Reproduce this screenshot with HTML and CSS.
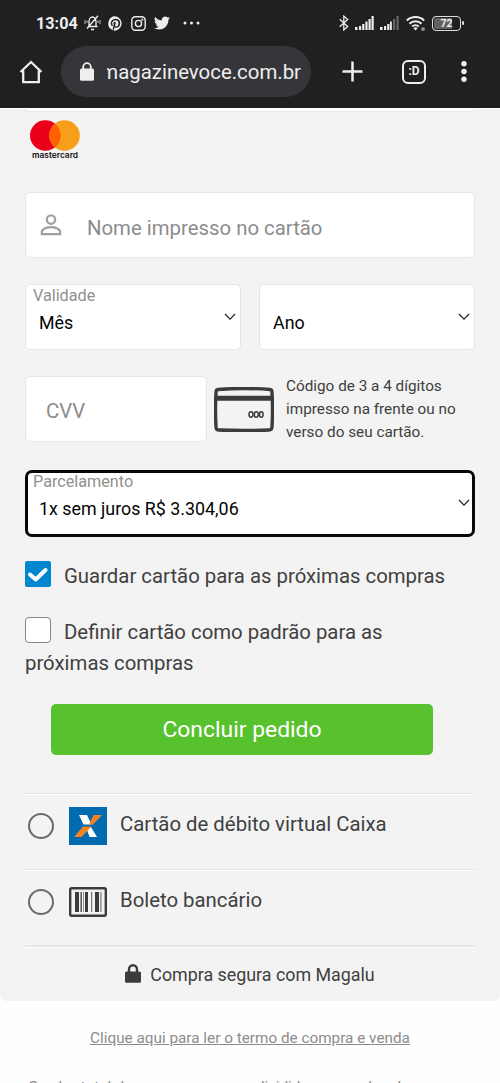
FILE: index.html
```html
<!DOCTYPE html>
<html lang="pt-BR">
<head>
<meta charset="utf-8">
<meta name="viewport" content="width=device-width, initial-scale=1">
<title>Pagamento</title>
<link rel="stylesheet" href="styles.css">
</head>
<body>
<header class="chrome">
  <div class="status">
    <span class="clock">13:04</span>
    <svg class="st-bell" width="17" height="16" viewBox="0 0 17 16" fill="none" stroke="#eee" stroke-width="1.300"><path d="M4 11.500h9M5 11V6.500a3.500 4.500 0 0 1 7 0V11l1.500 1M3 13.500L14 .8M7 14.500h3"/><path stroke="#999" d="M1 5v4M3 5.500v2.500M14 5.500v2.500M16 5v4"/></svg>
    <svg class="st-pin" width="15" height="15" viewBox="0 0 24 24"><path fill="#eee" d="M12 .5a11.5 11.5 0 0 0-4.2 22.2c-.1-.9-.2-2.300 0-3.300l1.400-5.700s-.4-.7-.4-1.700c0-1.600.9-2.800 2.100-2.800 1 0 1.500.7 1.500 1.600 0 1-.6 2.500-1 3.800-.3 1.200.6 2.100 1.700 2.100 2.100 0 3.700-2.200 3.700-5.300 0-2.800-2-4.700-4.900-4.700-3.300 0-5.200 2.500-5.200 5 0 1 .4 2.100.9 2.700v.4l-.4 1.300c0 .2-.2.3-.4.2-1.500-.7-2.400-2.800-2.400-4.600 0-3.700 2.700-7.200 7.900-7.200 4.100 0 7.300 2.900 7.300 6.900 0 4.100-2.600 7.400-6.200 7.400-1.200 0-2.300-.6-2.700-1.400l-.8 2.900c-.3 1-.9 2.200-1.400 3A11.500 11.500 0 1 0 12 .5z"/></svg>
    <svg class="st-insta" width="15" height="15" viewBox="0 0 15 15" fill="none" stroke="#eee" stroke-width="1.400"><rect x=".8" y=".8" width="13.400" height="13.400" rx="3.500"/><circle cx="7.500" cy="7.500" r="3.100"/><circle cx="11.300" cy="3.700" r=".4"/></svg>
    <svg class="st-bird" width="16" height="14" viewBox="0 2 24 20"><path fill="#eee" d="M23.950 4.570a10 10 0 0 1-2.820.770 4.960 4.960 0 0 0 2.160-2.720c-.950.550-2 .950-3.130 1.180a4.920 4.920 0 0 0-8.380 4.480C7.690 8.090 4.070 6.130 1.640 3.160a4.920 4.920 0 0 0 1.520 6.570 4.900 4.900 0 0 1-2.230-.610v.060a4.920 4.920 0 0 0 3.950 4.830 5 5 0 0 1-2.210.080 4.940 4.940 0 0 0 4.600 3.420A9.870 9.870 0 0 1 0 19.540a13.990 13.990 0 0 0 7.550 2.210c9.050 0 14-7.500 14-13.980l-.020-.640a10 10 0 0 0 2.420-2.560z"/></svg>
    <svg class="st-dots" width="17" height="4" viewBox="0 0 17 4" fill="#eee"><circle cx="2" cy="2" r="1.500"/><circle cx="8.500" cy="2" r="1.500"/><circle cx="15" cy="2" r="1.500"/></svg>
    <svg class="st-bt" width="10" height="16" viewBox="0 0 10 16" fill="none" stroke="#eee" stroke-width="1.300"><path d="M.7 4.200l8 7.300-3.900 3.400V1.100l3.900 3.400-8 7.300"/></svg>
    <svg class="st-sig" width="19" height="14" viewBox="0 0 19 14" fill="#eee"><path d="M0 11h2.500v3H0zM4 10h2.200v4H4zM7.200 8h2.200v6H7.200zM10.400 5.500h2.200V14h-2.200zM13.500 3h2.200v11h-2.200zM16.500 0h2.200v14h-2.200z"/></svg>
    <svg class="st-sig2" width="19" height="14" viewBox="0 0 19 14" fill="#eee"><path d="M0 11h2.500v3H0zM4 10h2.200v4H4zM7.200 8h2.200v6H7.200zM10 5.500h1.800V14H10z"/><path fill="#666" d="M13 3h2.200v11H13zM16.500 0h2.200v14h-2.200z"/></svg>
    <svg class="st-wifi" width="20" height="17" viewBox="0 0 20 17" fill="none" stroke="#eee" stroke-width="2"><path d="M.8 5.500a12.800 12.800 0 0 1 17.400 0M3.500 8.700a8.500 8.500 0 0 1 12 0M6.200 11.500a4.700 4.700 0 0 1 6.600 0"/><path fill="#eee" stroke="none" d="M7.300 13q2.200-1.400 4.400 0L9.500 15.500z"/><circle cx="17" cy="14" r="1.200" stroke="#aaa" stroke-width="1.300"/></svg>
    <div class="battery">72</div>
  </div>
  <div class="toolbar">
    <svg class="home" width="24" height="24" viewBox="0 0 24 24" fill="none" stroke="#eee" stroke-width="2.300"><path d="M1.500 12L12 2l10.500 10M4.200 10.500v11.700h15.600V10.500"/></svg>
    <div class="url">
      <svg width="14" height="19" viewBox="0 0 14 19"><path d="M3.200 8V5a3.800 3.800 0 0 1 7.600 0v3" fill="none" stroke="#eee" stroke-width="1.800"/><rect y="6.500" width="14" height="12.300" rx="1.500" fill="#eee"/></svg>
      <div class="address"><span>magazinevoce.com.br</span></div>
    </div>
    <svg class="plus" width="21" height="21" viewBox="0 0 21 21" stroke="#eee" stroke-width="2.500"><path d="M10.500 .5v20M.5 10.500h20"/></svg>
    <div class="tabs">:D</div>
    <svg class="kebab" width="6" height="21" viewBox="0 0 6 21" fill="#eee"><circle cx="3" cy="2.700" r="2.700"/><circle cx="3" cy="10.500" r="2.700"/><circle cx="3" cy="18.300" r="2.700"/></svg>
  </div>
</header>

<main class="checkout">
  <div class="prev-field"></div>
  <svg class="brand" width="50" height="42" viewBox="0 0 50 42"><circle cx="15.300" cy="15.500" r="15.300" fill="#eb001b"/><circle cx="34.500" cy="15.500" r="15.300" fill="#f79e1b"/><path d="M25 3.600a15.300 15.300 0 0 1 0 23.800 15.300 15.300 0 0 1 0-23.800z" fill="#ff5f00"/><text class="brand-name" x="2" y="38.300" textLength="46" lengthAdjust="spacingAndGlyphs">mastercard</text></svg>

  <div class="field name-field">
    <svg width="22" height="22" viewBox="0 0 22 22" fill="none" stroke="#a0a0a0" stroke-width="2.200"><circle cx="11" cy="5.600" r="4.200"/><path d="M1.800 20.200v-2.400c0-2.500 5-4.600 9.200-4.600s9.200 2.100 9.200 4.600v2.400z"/></svg>
    <span class="hint">Nome impresso no cartão</span>
  </div>

  <div class="expiry">
    <div class="field select"><span class="label">Validade</span><span class="value">Mês</span><svg class="chev" width="12" height="8" viewBox="0 0 12 8"><path d="M1 1l5 5.200L11 1"/></svg></div>
    <div class="field select"><span class="label"></span><span class="value">Ano</span><svg class="chev" width="12" height="8" viewBox="0 0 12 8"><path d="M1 1l5 5.200L11 1"/></svg></div>
  </div>

  <div class="cvv-row">
    <div class="field cvv"><span class="hint">CVV</span></div>
    <svg class="card" width="60" height="45" viewBox="0 0 60 45" fill="none" stroke="#3c3c3c"><path d="M4 2.500Q30 .5 56 2.500q2 .2 2 3Q59 22 58 40q-.2 3-3 3-25 1-50 0-3 0-3-3Q1 22 2 5.500q0-2.800 2-3z" stroke-width="3.400"/><path d="M2 11.200h56" stroke-width="5"/><path d="M4 6.500q26-2 52 0" stroke="#f3f3f3" stroke-width="2.600"/><g stroke-width="1.500"><ellipse cx="37" cy="27.500" rx="2" ry="2.700"/><ellipse cx="42.300" cy="27.500" rx="2" ry="2.700"/><ellipse cx="47.300" cy="27.500" rx="1.800" ry="2.700"/></g></svg>
    <p class="cvv-help">Código de 3 a 4 dígitos<br>impresso na frente ou no<br>verso do seu cartão.</p>
  </div>

  <div class="field select installments"><span class="label">Parcelamento</span><span class="value">1x sem juros R$ 3.304,06</span><svg class="chev" width="12" height="8" viewBox="0 0 12 8"><path d="M1 1l5 5.200L11 1"/></svg></div>

  <div class="check-line save"><span class="box on"><svg width="26" height="26" viewBox="0 0 26 26"><path d="M5 13.500l5.700 5L20.500 9" fill="none" stroke="#fff" stroke-width="4" stroke-linecap="round" stroke-linejoin="round"/></svg></span><span class="save-text">Guardar cartão para as próximas compras</span></div>
  <div class="check-line default"><span class="box"></span><span class="def-text">Definir cartão como padrão para as</span><br><span class="def-text2">próximas compras</span></div>

  <div class="submit"><span>Concluir pedido</span></div>

  <div class="method debit">
    <span class="radio"></span>
    <svg width="38" height="38" viewBox="0 0 38 38"><path fill="#006bae" d="M0 0h38v38H0z"/><path fill="#fff" d="M10 8h8l4.500 9.500h-8zM17.500 21.500L22 20l6 10h-7.500z"/><path fill="#f58220" d="M24.500 8H33l-9 9.500h-4zM14 19.500h8.500L12.500 30H5z"/></svg>
    <span class="method-name">Cartão de débito virtual Caixa</span>
  </div>
  <div class="method boleto">
    <span class="radio"></span>
    <svg width="38" height="30" viewBox="0 0 38 30"><rect x="1.200" y="1.200" width="35.600" height="27.600" rx="1.500" fill="#f3f3f3" stroke="#3c3c3c" stroke-width="2.400"/><path fill="#3c3c3c" d="M6 5h4v20H6zM11.500 5h1.300v20h-1.300zM16 5h3v20h-3zM26 5h4v20h-4z"/><path fill="#777" d="M14 5h.8v20H14zM22 5h1.200v20H22zM31.300 5h1.200v20h-1.200z"/></svg>
    <span class="method-name">Boleto bancário</span>
  </div>
  <div class="secure">
    <svg width="16" height="19" viewBox="0 0 16 19"><path d="M4 9V5.200a4 4 0 0 1 8 0V9" fill="none" stroke="#3c3c3c" stroke-width="2.400"/><rect y="7.500" width="16" height="11.200" rx="1.500" fill="#3c3c3c"/></svg>
    <span class="secure-text">Compra segura com Magalu</span>
  </div>
</main>
<footer class="legal">
  <a class="terms">Clique aqui para ler o termo de compra e venda</a>
  <p class="note">O valor total da sua compra sera dividido em vendas de</p>
</footer>
</body>
</html>
```
FILE: styles.css
```css
* { box-sizing: border-box; }
body { margin: 0; width: 500px; height: 1083px; overflow: hidden; background: #fefefe; font-family: Roboto, "Open Sans", sans-serif; color: #404040; }
svg { display: block; flex: none; }
span, a { white-space: nowrap; }

.chrome { height: 108px; background: #202020; color: #eee; }
.status { display: flex; align-items: center; height: 46px; padding-left: 36px; }
.clock { width: 41px; font-size: 16.200px; font-weight: 700; }
.st-bell { margin-left: 7px; }
.st-pin { margin-left: 7px; }
.st-insta { margin-left: 8px; }
.st-bird { margin-left: 8px; }
.st-dots { margin-left: 13px; }
.st-bt { margin-left: 139px; }
.st-sig { margin-left: 6px; }
.st-sig2 { margin-left: 6px; }
.st-wifi { margin-left: 7px; }
.battery { position: relative; width: 29px; height: 15px; margin-left: 6px; border: 1.500px solid #ddd; border-radius: 4px; background: linear-gradient(90deg, #626262 72%, #202020 72%); font-size: 10.500px; font-weight: 700; line-height: 14px; text-align: center; box-shadow: inset 0 0 0 1px #202020; }
.battery::after { content: ""; position: absolute; right: -4px; top: 4px; width: 2px; height: 4px; background: #ddd; border-radius: 1px; }
.toolbar { display: flex; align-items: center; height: 51px; padding-left: 19px; }
.url { display: flex; align-items: center; width: 250px; height: 51px; margin-left: 18px; padding-left: 19px; border-radius: 26px; background: #35363a; }
.address { display: flex; justify-content: flex-end; width: 194px; margin: 1px 0 0 13px; overflow: hidden; font-size: 20.400px; }
.plus { margin-left: 31px; }
.tabs { width: 24px; height: 24px; margin-left: 39px; border: 2.500px solid #eee; border-radius: 6px; font-size: 12px; font-weight: 700; line-height: 19px; text-align: center; }
.kebab { margin-left: 35px; }

.checkout { height: 893px; padding: 0 25px; background: #f3f3f3; border-top: 1px solid #fff; border-radius: 0 0 6px 6px; }
.prev-field { height: 3px; border: 1px solid #e7e7e7; border-top: 0; border-radius: 0 0 5px 5px; background: #fff; }
.brand { margin: 8px 0 0 5px; }
.brand-name { font: 600 8px Inter, sans-serif; fill: #111; }
.field { border: 1px solid #e6e6e6; border-radius: 5px; background: #fff; }
.name-field { display: flex; align-items: center; height: 66px; margin-top: 30px; padding-left: 14px; }
.name-field .hint { margin: 5px 0 0 25px; }
.hint { font-size: 20.350px; color: #8c8c8c; }
.expiry { display: grid; grid-template-columns: 216px 216px; gap: 18px; margin-top: 26px; }
.select { position: relative; display: flex; flex-direction: column; height: 66px; padding: 2px 0 0 7px; }
.label { height: 20px; font-size: 16.200px; line-height: 18px; color: #8f8f8f; }
.value { margin: 4px 0 0 6px; font-size: 17.850px; line-height: 24px; color: #050505; }
.chev { position: absolute; right: 4px; top: 28px; fill: none; stroke: #222; stroke-width: 1.200; }
.cvv-row { display: flex; height: 67px; margin-top: 26px; }
.cvv { display: flex; align-items: center; width: 182px; height: 66px; padding: 3px 0 0 20px; }
.card { margin: 11px 0 0 7px; }
.cvv-help { margin: -1px 0 0 12px; font-size: 15.300px; line-height: 23px; white-space: nowrap; }
.installments { height: 67px; margin-top: 27px; padding: 0 0 0 5px; border: 3px solid #080808; border-radius: 7px; }
.installments .value { margin-top: 4px; }
.installments .chev { right: 2px; top: 26px; }
.check-line { font-size: 20.350px; line-height: 31px; }
.box { display: inline-block; width: 26px; height: 26px; margin-right: 13px; vertical-align: -4px; border: 1.500px solid #858585; border-radius: 4px; background: #fff; }
.box.on { border: 0; border-radius: 2px; background: #0286d0; }
.save { margin-top: 24px; }
.default { margin-top: 25px; }
.submit { display: flex; align-items: center; justify-content: center; width: 382px; height: 51px; margin: 25px 0 0 26px; border-radius: 5px; background: #58c22e; color: #fff; font-size: 22.900px; }
.method { display: flex; align-items: center; height: 76px; padding: 0 0 12px 3px; border-top: 1px solid #e2e2e2; box-shadow: inset 0 1px 0 #fff; }
.debit { margin-top: 38px; }
.radio { width: 26px; height: 26px; margin-right: 15px; border: 2px solid #6b6b6b; border-radius: 50%; }
.method-name { margin: -3px 0 0 13px; font-size: 20.350px; }
.secure { display: flex; align-items: center; justify-content: center; height: 54px; border-top: 2px solid #e7e7e7; box-shadow: inset 0 1px 0 #fff; }
.secure-text { margin: 3px 0 0 9px; font-size: 17.850px; }
.legal { display: flex; flex-direction: column; align-items: center; padding-top: 27px; color: #8c8c8c; }
.terms { font-size: 15.300px; line-height: 20px; text-decoration: underline; }
.note { align-self: flex-start; margin: 29px 0 0 28px; font-size: 15.300px; line-height: 20px; word-spacing: .6px; white-space: nowrap; }
```
